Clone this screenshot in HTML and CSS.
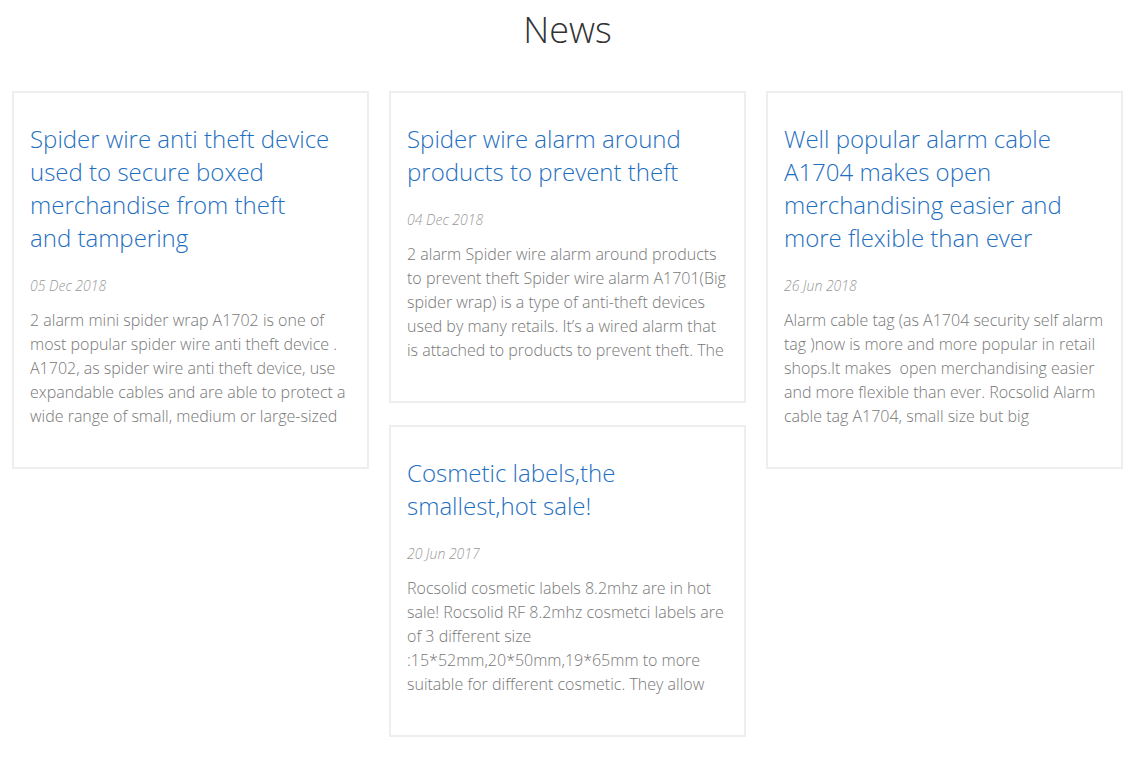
FILE: index.html
```html
<!DOCTYPE html>
<html lang="en">
   <head>
      <meta charset="UTF-8">
      <meta name="viewport" content="width=device-width, initial-scale=1.0">
      <title>News</title>
      <link rel="stylesheet" href="styles.css">
   </head>
   <body>
      <div class="news">
         <h2 class="news-title">News</h2>
         <div class="news-grid">
            <div class="news-col">
               <div class="news-item">
                  <a class="item-title" href="#">Spider wire anti theft device used to secure boxed merchandise from theft<br>and tampering</a>
                  <div class="item-date">05 Dec 2018</div>
                  <p class="item-text">2 alarm mini spider wrap A1702 is one of most popular spider wire anti theft device . A1702, as spider wire anti theft device, use expandable cables and are able to protect a wide range of small, medium or large-sized boxed merchandise from theft and tampering.</p>
               </div>
            </div>
            <div class="news-col">
               <div class="news-item">
                  <a class="item-title" href="#">Spider wire alarm around products to prevent theft</a>
                  <div class="item-date">04 Dec 2018</div>
                  <p class="item-text">2 alarm Spider wire alarm around products to prevent theft Spider wire alarm A1701(Big spider wrap) is a type of anti-theft devices used by many retails. It’s a wired alarm that is attached to products to prevent theft. The alarm will sound when the cable is cut.</p>
               </div>
               <div class="news-item">
                  <a class="item-title" href="#">Cosmetic labels,the smallest,hot sale!</a>
                  <div class="item-date">20 Jun 2017</div>
                  <p class="item-text">Rocsolid cosmetic labels 8.2mhz are in hot sale! Rocsolid RF 8.2mhz cosmetci labels are of 3 different size :15*52mm,20*50mm,19*65mm to more suitable for different cosmetic. They allow retailers to protect small items.</p>
               </div>
            </div>
            <div class="news-col">
               <div class="news-item">
                  <a class="item-title" href="#">Well popular alarm cable A1704 makes open merchandising easier and more flexible than ever</a>
                  <div class="item-date">26 Jun 2018</div>
                  <p class="item-text">Alarm cable tag (as A1704 security self alarm tag )now is more and more popular in retail shops.It makes &nbsp;open merchandising easier and more flexible than ever. Rocsolid Alarm cable tag A1704, small size but big functionality, protects your goods well.</p>
               </div>
            </div>
         </div>
      </div>
   </body>
</html>
```

FILE: styles.css
```css
body {
   margin: 0;
   background: #fff;
   font-family: "Open Sans", sans-serif;
   font-weight: 300;
}
.news {
   padding: 0 11px 0 12px;
}
.news-title {
   margin: 0;
   padding-top: 8px;
   height: 83px;
   text-align: center;
   font-size: 36px;
   font-weight: 300;
   line-height: 44px;
   color: #333;
}
.news-grid {
   display: flex;
   gap: 20px;
}
.news-col {
   flex: 1;
   display: flex;
   flex-direction: column;
   gap: 22px;
}
.news-item {
   border: 2px solid #eee;
   padding: 29px 16px 39px;
}
.item-title {
   display: block;
   font-size: 24px;
   line-height: 33px;
   color: #1f6fbf;
   text-decoration: none;
}
.item-date {
   margin-top: 22px;
   font-size: 14px;
   line-height: 20px;
   font-style: italic;
   color: #999;
}
.item-text {
   margin: 12px 0 0;
   font-size: 16px;
   line-height: 24px;
   color: #777;
   max-height: 120px;
   overflow: hidden;
}
```
